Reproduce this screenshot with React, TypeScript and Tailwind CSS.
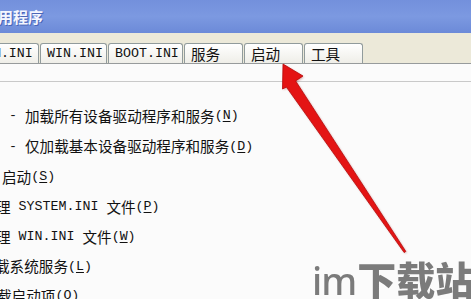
import React from "react";

const C = ({ children, className = "" }: { children: React.ReactNode; className?: string }) => (
  <span className={"font-['Noto_Sans_CJK_SC',sans-serif] text-[14.6px] whitespace-pre " + className}>{children}</span>
);
const L = ({ children, className = "" }: { children: React.ReactNode; className?: string }) => (
  <span className={"font-['Liberation_Mono',monospace] text-[13.3px] whitespace-pre " + className}>{children}</span>
);
const Key = ({ k }: { k: string }) => (
  <L>
    (<span className="underline underline-offset-[2px]">{k}</span>)
  </L>
);

const Tab = ({ w, children, className = "" }: { w: string; children: React.ReactNode; className?: string }) => (
  <div
    className={
      "h-[20px] shrink-0 border border-b-0 border-[#919b9c] rounded-t-[3px] bg-gradient-to-b from-[#ffffff] to-[#efeee8] pl-[6px] pt-[1px] flex items-center leading-none text-[#111] whitespace-nowrap overflow-hidden " +
      w +
      " " +
      className
    }
  >
    {children}
  </div>
);

const Row = ({ h, pl, children }: { h: string; pl: string; children: React.ReactNode }) => (
  <div className={"flex items-center whitespace-nowrap text-[#111] leading-none " + h + " " + pl}>{children}</div>
);

export default function App() {
  return (
    <div className="relative w-[471px] h-[299px] overflow-hidden bg-[#fbfbfb]">
      {/* title bar */}
      <div className="h-[33px] bg-gradient-to-b from-[#7390dc] via-[#7c99e1] to-[#6c8ad8] flex items-center pb-[1px]">
        <span className="ml-[-2px] font-['Noto_Sans_CJK_SC',sans-serif] text-[15px] font-bold text-[#f4f6ff] leading-none [text-shadow:1px_1px_0_#4a66b8]">
          用程序
        </span>
      </div>
      {/* tab strip */}
      <div className="h-[30px] bg-[#ece9d9] flex items-end gap-[1px]">
        <Tab w="w-[93px]" className="ml-[-54px]">
          <L>SYSTEM.INI</L>
        </Tab>
        <Tab w="w-[67px]">
          <L>WIN.INI</L>
        </Tab>
        <Tab w="w-[75px]">
          <L>BOOT.INI</L>
        </Tab>
        <Tab w="w-[59px]">
          <C>服务</C>
        </Tab>
        <Tab w="w-[59px]">
          <C>启动</C>
        </Tab>
        <Tab w="w-[59px]">
          <C>工具</C>
        </Tab>
      </div>
      <div className="h-[1px] bg-[#979b9c]" />
      {/* content */}
      <div className="pt-[17px]">
        <div className="h-[1px] bg-[#c9c9c9]" />
        <div className="pt-[19px] flex flex-col">
          <Row h="h-[30px]" pl="pl-[9px]">
            <L>- </L>
            <C>加载所有设备驱动程序和服务</C>
            <Key k="N" />
          </Row>
          <Row h="h-[31px]" pl="pl-[9px]">
            <L>- </L>
            <C>仅加载基本设备驱动程序和服务</C>
            <Key k="D" />
          </Row>
          <Row h="h-[30px]" pl="pl-[2px]">
            <C>启动</C>
            <Key k="S" />
          </Row>
          <Row h="h-[30px]" pl="ml-[-4px]">
            <C>理</C>
            <L> SYSTEM.INI </L>
            <C>文件</C>
            <Key k="P" />
          </Row>
          <Row h="h-[30px]" pl="ml-[-4px]">
            <C>理</C>
            <L> WIN.INI </L>
            <C>文件</C>
            <Key k="W" />
          </Row>
          <Row h="h-[29px]" pl="ml-[-5px]">
            <C>载系统服务</C>
            <Key k="L" />
          </Row>
          <Row h="h-[30px]" pl="ml-[-3px]">
            <C>载启动项</C>
            <Key k="O" />
          </Row>
        </div>
      </div>

      {/* red arrow overlay */}
      <svg className="absolute left-0 top-0" width="471" height="299" viewBox="0 0 471 299">
        <defs>
          <filter id="sh" x="-20%" y="-20%" width="140%" height="140%">
            <feGaussianBlur stdDeviation="0.8" />
          </filter>
        </defs>
        <polygon
          points="283,64 303,76 295.6,80.9 405.8,251.4 404.2,252.6 286.4,87.1 282.5,89"
          fill="#8a0000"
          opacity="0.35"
          filter="url(#sh)"
          transform="translate(1,1)"
        />
        <polygon
          points="283,64 303,76 295.6,80.9 405.8,251.4 404.2,252.6 286.4,87.1 282.5,89"
          fill="#e41414"
          stroke="#b50808"
          strokeWidth="0.8"
          strokeLinejoin="round"
        />
      </svg>

      {/* watermark */}
      <div className="absolute left-[312px] top-[259px] flex items-baseline leading-none whitespace-nowrap text-[#6e6e6e] opacity-90">
        <span className="font-['Noto_Sans',sans-serif] text-[38px] font-medium tracking-[-1px]">im</span>
        <span className="ml-[1px] font-['Noto_Sans_CJK_SC',sans-serif] text-[39px] font-black">下载站</span>
      </div>
    </div>
  );
}
